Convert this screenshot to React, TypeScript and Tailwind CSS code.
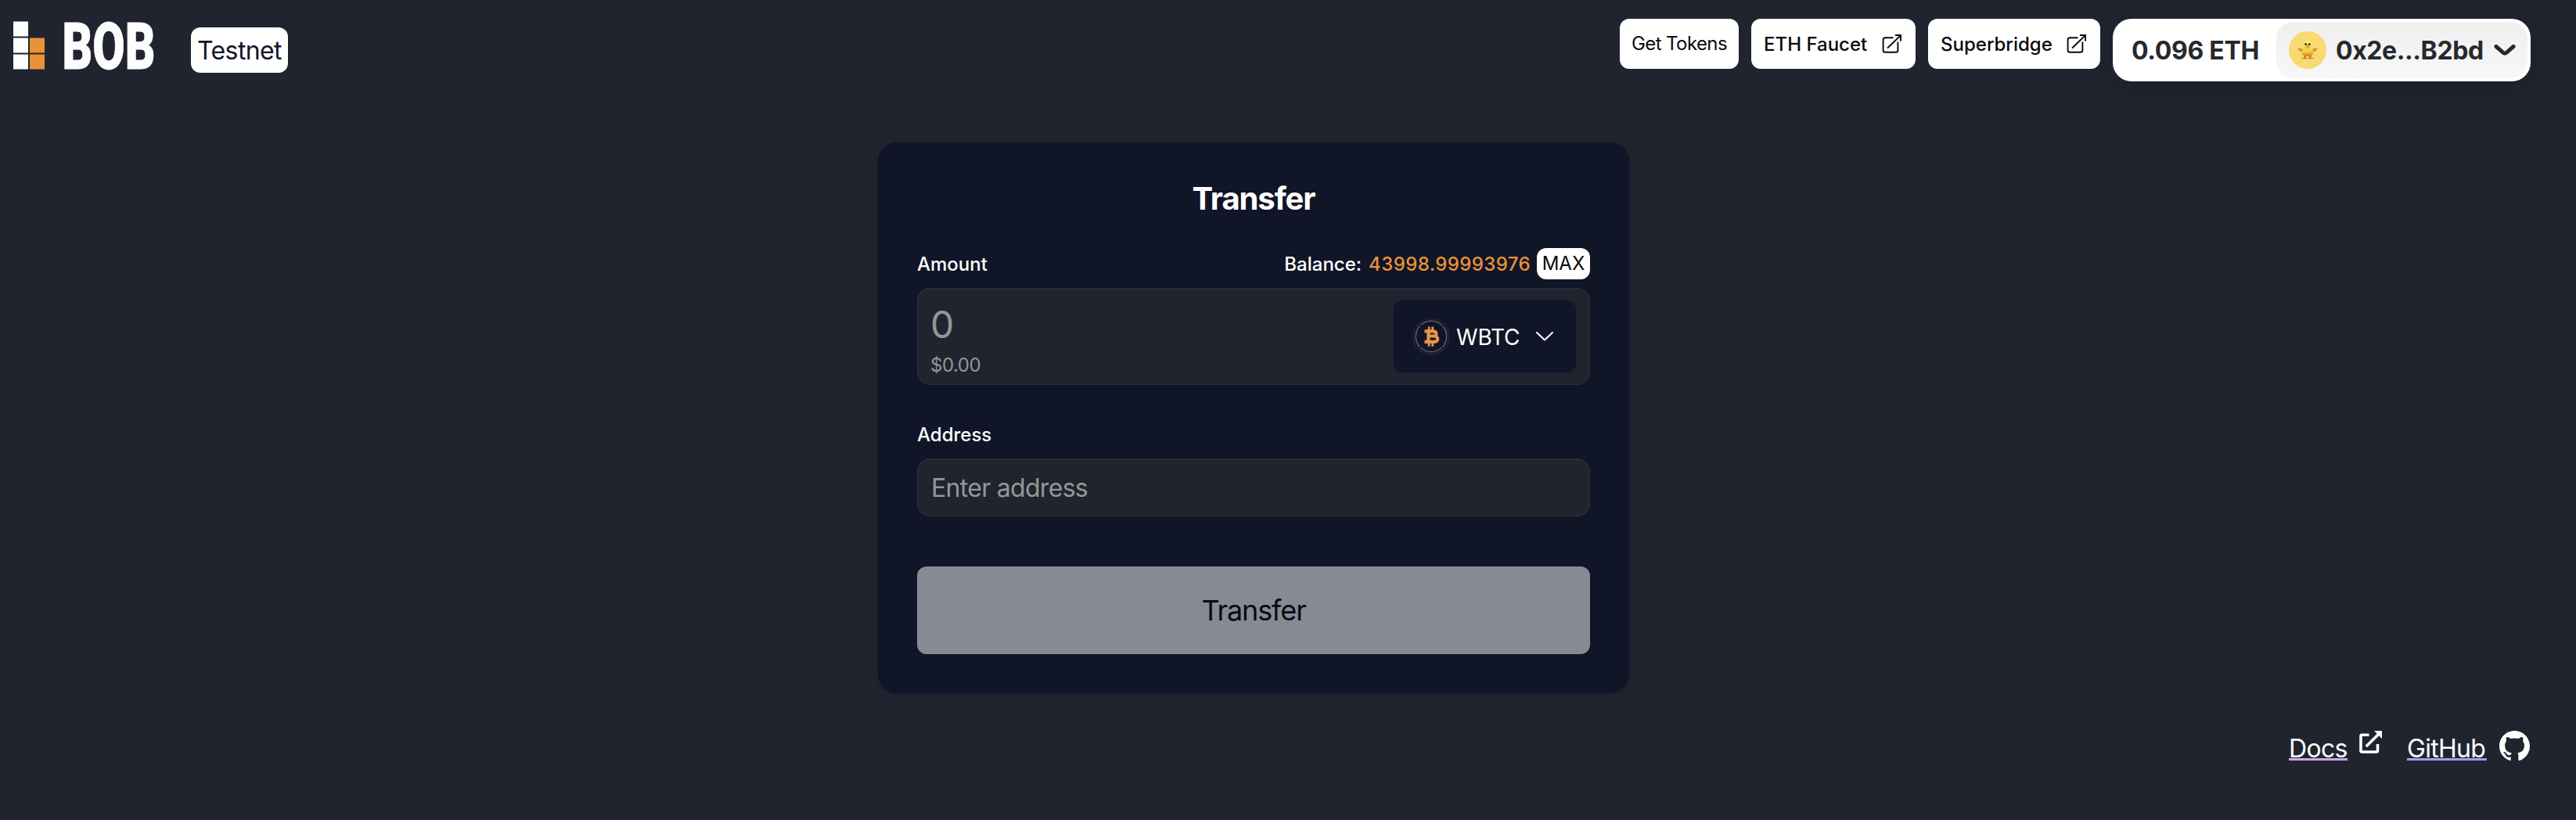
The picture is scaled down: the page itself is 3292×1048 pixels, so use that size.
import React from "react";

function LinkBoxIcon() {
  return (
    <svg className="-mt-[3px] h-[28px] w-[28px]" viewBox="0 0 28 28" fill="none" stroke="#0a0a0a" strokeWidth="1.9">
      <path d="M15.5 6.2H5.2a2.6 2.6 0 0 0-2.6 2.6v13.400a2.6 2.6 0 0 0 2.6 2.6h13.600a2.6 2.6 0 0 0 2.6-2.6V11.500" />
      <path d="M8 19.500 24.500 3.600M18 3h7v7.400" />
    </svg>
  );
}

function Chick() {
  return (
    <svg className="h-12 w-12 shrink-0" viewBox="0 0 48 48">
      <defs>
        <linearGradient id="chick-body" x1="0" y1="0" x2="0" y2="1">
          <stop offset="0" stopColor="#fbe04c" />
          <stop offset=".5" stopColor="#f7c83c" />
          <stop offset="1" stopColor="#d47a20" />
        </linearGradient>
        <linearGradient id="chick-head" x1="0" y1="0" x2="0" y2="1">
          <stop offset="0" stopColor="#fff26a" />
          <stop offset=".7" stopColor="#fbdc48" />
          <stop offset="1" stopColor="#e6a535" />
        </linearGradient>
      </defs>
      <circle cx="24" cy="24" r="24" fill="#f9d971" />
      <path d="M16 34.600h16" stroke="#cf8433" strokeWidth="1.100" />
      <path d="M20.500 31v3.500M27.500 31v3.500" stroke="#b05a1c" strokeWidth="1.800" />
      <path d="M18.500 22.500c-2.500.2-4.500-.4-6.900-1.400.4 3.600 3 5.500 6 5zM29.500 22.500c2.500.2 4.500-.4 6.900-1.400-.4 3.600-3 5.500-6 5z" fill="#db8a32" />
      <ellipse cx="24" cy="26.300" rx="7.800" ry="6" fill="url(#chick-body)" />
      <ellipse cx="24" cy="16.800" rx="5" ry="5.300" fill="url(#chick-head)" />
      <circle cx="21.700" cy="16.600" r="1.500" fill="#2c4040" />
      <circle cx="26.300" cy="16.600" r="1.500" fill="#2c4040" />
      <path d="M22.600 18.300h2.800L24 21z" fill="#cf6319" />
    </svg>
  );
}

function Coin() {
  return (
    <svg className="h-12 w-12 shrink-0" viewBox="0 0 48 48" fill="none">
      <circle cx="24" cy="24" r="22.800" stroke="#2a2238" strokeWidth="1.600" />
      <circle cx="24" cy="24" r="19.700" stroke="#5d5b6b" strokeWidth="1.600" strokeDasharray="29.500 1.445" strokeDashoffset="-16.200" />
      <g stroke="#e8964a">
        <path d="M15.500 17.300h10.500c6 0 6 6.200 0 6.200h-6.500M19.500 23.500H27c7 0 7 7.400 0 7.400H15.500M20.500 17v14" strokeWidth="4.200" />
        <path d="M21.200 11.500v5M25.800 11.500v5M21.200 31.500v5.200M25.800 31.500v5.200" strokeWidth="2.800" />
      </g>
    </svg>
  );
}

export default function App() {
  return (
    <div className="flex h-[1048px] w-full flex-col overflow-hidden bg-[#20242f] font-['Inter',sans-serif] text-white">
      <header className="flex h-[182px] items-start justify-between pr-[58px] pl-[17px]">
        <div className="flex">
          <svg className="h-[120px] w-[200px]" viewBox="0 -27 200 120">
            <g fill="#fdfdfd">
              <rect width="19" height="19" y="0.500" />
              <rect width="19" height="19" y="21.500" />
              <rect width="19" height="19" y="42.500" />
            </g>
            <g fill="#e99235">
              <rect x="21" width="19" height="19" y="21.500" />
              <rect x="21" width="19" height="19" y="42.500" />
            </g>
            <text x="62.500" y="60.500" fill="#fdfdfd" stroke="#fdfdfd" strokeWidth="0.800" fontFamily="Roboto" fontWeight="900" fontSize="83" textLength="119" lengthAdjust="spacingAndGlyphs">BOB</text>
          </svg>
          <div className="mt-[35px] ml-[27px] flex h-[58px] w-[124px] items-center justify-center rounded-xl bg-white pt-0.5 text-[32px] tracking-[-0.6px] text-[#11162a]">
            Testnet
          </div>
        </div>
        <div className="flex gap-4 pt-6 text-2xl text-[#0a0a0a]">
          <button className="flex h-16 w-[152px] items-center justify-center rounded-xl bg-white tracking-[-0.6px]">Get Tokens</button>
          <button className="flex h-16 w-[210px] items-center justify-between rounded-xl bg-white pt-0.5 pr-4 pl-4 font-medium">
            ETH Faucet
            <LinkBoxIcon />
          </button>
          <button className="flex h-16 w-[220px] items-center justify-between rounded-xl bg-white pt-0.5 pr-4 pl-4 font-medium">
            Superbridge
            <LinkBoxIcon />
          </button>
          <div className="flex h-20 w-[534px] items-center justify-between rounded-[24px] bg-white p-1 pl-6 text-[32px] font-bold text-[#25292e] shadow-[0_8px_32px_rgba(0,0,0,0.12)]">
            <span className="pt-0.5 tracking-[-0.3px]">0.096 ETH</span>
            <div className="flex h-[72px] w-[321px] items-center rounded-[22px] bg-linear-to-b from-[#efefef] to-[#f7f7f7] pl-4">
              <Chick />
              <span className="ml-3 w-[190px] pt-0.5 tracking-[-0.4px] whitespace-nowrap">0x2e...B2bd</span>
              <svg className="ml-3 h-4 w-7" viewBox="0 0 28 16" fill="none" stroke="#25292e" strokeWidth="5" strokeLinecap="round" strokeLinejoin="round">
                <path d="M3 3.500 12 11.300q2 1.600 4 0L25 3.500" />
              </svg>
            </div>
          </div>
        </div>
      </header>

      <main className="ml-[1122px] flex h-[704px] w-[960px] flex-col rounded-[24px] bg-[#101527] px-[50px] shadow-[0_2px_8px_rgba(0,0,0,0.12)]">
        <h1 className="mt-[48px] text-center text-[40px] leading-[48px] font-bold tracking-[-1.1px]">Transfer</h1>
        <div className="mt-[39px] flex h-10 items-center text-2xl font-medium">
          <span className="grow pt-0.5">Amount</span>
          <span className="mr-[9px] pt-0.5">Balance:</span>
          <span className="mr-2 pt-0.5 tracking-[0.4px] text-[#e99235]">43998.99993976</span>
          <button className="flex h-10 w-[68px] items-center justify-center rounded-[12px] bg-white font-normal text-[#0a0a0a]">MAX</button>
        </div>
        <div className="mt-[11px] flex h-[124px] justify-between rounded-2xl border-2 border-[#282b37] bg-[#20242f] pr-4 pl-[15px] text-[#969696]">
          <div className="flex flex-col">
            <span className="mt-[19px] text-[48px] leading-[52px]">0</span>
            <span className="mt-[12px] text-2xl leading-[28px] tracking-[-0.5px]">$0.00</span>
          </div>
          <div className="mt-[14px] flex h-[92px] w-[233px] items-center rounded-[12px] bg-[#101527] pl-6 text-white shadow-[0_0_0_1px_#1c2030]">
            <Coin />
            <span className="ml-2 w-[82px] pt-px text-[28px] tracking-[-0.2px] whitespace-nowrap">WBTC</span>
            <svg className="ml-[19px] h-[14px] w-6" viewBox="0 0 24 14" fill="none" stroke="#fff" strokeWidth="2" strokeLinecap="round" strokeLinejoin="round">
              <path d="M2 2l10 9.500L22 2" />
            </svg>
          </div>
        </div>
        <label className="mt-[50px] text-2xl leading-[28px] font-medium">Address</label>
        <div className="mt-4 flex h-[74px] items-center rounded-2xl border-2 border-[#282b37] bg-[#20242f] pt-0.5 pl-4 text-[32px] tracking-[-0.7px] text-[#969696]">
          Enter address
        </div>
        <button className="mt-16 flex h-[112px] items-center justify-center rounded-xl bg-[#878a93] text-[36px] tracking-[-1.1px] text-[#080b14]">Transfer</button>
      </main>

      <footer className="mt-[48px] flex h-[48px] justify-end pr-[59px] text-[32px] leading-[46px] tracking-[-0.7px]">
        <a className="mr-[15px] h-[38px] w-[75px] border-b-[3px] border-[#c9a7ee]">Docs</a>
        <svg className="mr-[32px] h-[29px] w-[29px]" viewBox="0 0 29 29" fill="none" stroke="#fff" strokeWidth="3.600">
          <path d="M12.500 5.300H3.500a1.500 1.500 0 0 0-1.500 1.500V25.500A1.500 1.500 0 0 0 3.500 27H22a1.500 1.500 0 0 0 1.500-1.500V17" />
          <path d="M8.800 20 24.500 4.500" />
          <path d="M19 0h10v10z" fill="#fff" stroke="none" />
        </svg>
        <a className="mr-[16px] h-[38px] w-[102px] border-b-[3px] border-[#9f9ff8]">GitHub</a>
        <svg className="h-[39px] w-[39px]" viewBox="0 0 16 16" fill="#fff">
          <path d="M8 0C3.580 0 0 3.580 0 8c0 3.540 2.290 6.530 5.470 7.590.4.070.55-.17.55-.38 0-.19-.01-.82-.01-1.490-2.010.37-2.530-.49-2.690-.94-.09-.23-.48-.94-.82-1.130-.28-.15-.68-.52-.01-.53.63-.01 1.080.58 1.230.82.72 1.210 1.870.87 2.330.66.07-.52.28-.87.51-1.070-1.780-.2-3.640-.89-3.640-3.950 0-.87.31-1.590.82-2.150-.08-.2-.36-1.020.08-2.120 0 0 .67-.21 2.200.82.64-.18 1.320-.27 2-.27s1.360.09 2 .27c1.530-1.040 2.200-.82 2.200-.82.44 1.100.16 1.920.08 2.120.51.56.82 1.270.82 2.150 0 3.070-1.870 3.750-3.650 3.950.29.25.54.73.54 1.480 0 1.070-.01 1.930-.01 2.200 0 .21.15.46.55.38A8.010 8.010 0 0 0 16 8c0-4.420-3.580-8-8-8z" />
        </svg>
      </footer>
    </div>
  );
}
